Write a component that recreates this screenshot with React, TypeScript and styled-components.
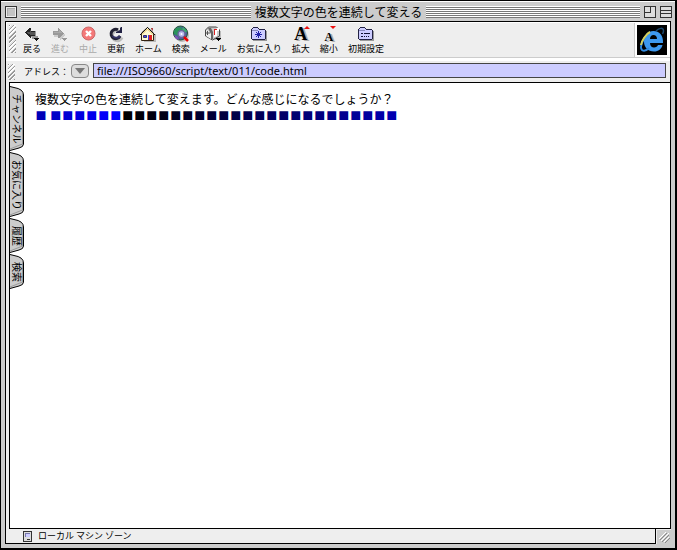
import React from "react";
import styled, { createGlobalStyle } from "styled-components";

const GlobalStyle = createGlobalStyle`
  * { box-sizing: border-box; }
  html, body { margin: 0; padding: 0; }
  body {
    background: #ccc;
    color: #000;
    font-family: "Noto Sans CJK JP", sans-serif;
    font-size: 9px;
    line-height: 12px;
  }
  button, input { font: inherit; color: inherit; }
`;

const Window = styled.div`
  display: flex;
  flex-direction: column;
  min-height: 100vh;
  background: #ccc;
  border: 1px solid #000;
  border-width: 1px 2px 2px 1px;
`;

const TitleBar = styled.header`
  display: flex;
  align-items: center;
  height: 20px;
  padding: 0 3px 0 4px;
  gap: 4px;
  border-top: 1px solid #fff;
`;

const TitleSide = styled.div`
  flex: 1;
  display: flex;
  align-items: center;
  gap: 4px;
`;

const WindowTitle = styled.h1`
  margin: 0;
  font-size: 12px;
  font-weight: 400;
  line-height: 18px;
  white-space: nowrap;
`;

const Stripes = styled.div`
  flex: 1;
  height: 12px;
  background: repeating-linear-gradient(#fff 0 1px, #777 1px 2px);
`;

const BoxButton = styled.button`
  display: block;
  width: 12px;
  height: 12px;
  padding: 0;
  border: 0;
  background: none;
  svg { display: block; }
`;

const Frame = styled.div`
  flex: 1;
  display: flex;
  flex-direction: column;
  margin: 0 4px;
  border: 1px solid #000;
  border-bottom: 0;
  background: #eee;
`;

const ToolRow = styled.div`
  display: flex;
  height: 36px;
  border: 1px solid #fff;
  border-right: 0;
  border-bottom: 1px solid #ccc;
`;

const Grip = styled.div<{ $tall?: boolean }>`
  width: 7px;
  height: ${(p) => (p.$tall ? 28 : 16)}px;
  margin: 2px 0 0 2px;
  background: repeating-linear-gradient(135deg, #999 0 1px, #fff 1px 2px, #e4e4e4 2px 3px);
`;

const Tools = styled.nav`
  flex: 1;
  display: flex;
  gap: 10px;
  padding-left: 7px;
`;

const Tool = styled.button<{ $dim?: boolean }>`
  display: flex;
  flex-direction: column;
  align-items: center;
  padding: 2px 0 0;
  border: 0;
  background: none;
  color: ${(p) => (p.$dim ? "#aaa" : "#000")};
  white-space: nowrap;
  svg { display: block; margin: 0 -2px; }
`;

const LetterIcon = styled.span<{ $size: number }>`
  position: relative;
  display: flex;
  align-items: flex-end;
  height: 18px;
  padding-bottom: 1px;
  font-family: "Liberation Serif", serif;
  font-size: ${(p) => p.$size}px;
  font-weight: 700;
  line-height: ${(p) => p.$size - 3}px;
  text-shadow: 2px 1px 0 #aaa;
  svg {
    position: absolute;
    top: 1px;
    right: -3px;
    margin: 0;
  }
`;

const LogoPanel = styled.div`
  padding: 2px 3px 2px 2px;
  border-left: 1px solid #ccc;
  background: #fff;
  svg { display: block; }
`;

const AddressRow = styled.form`
  display: flex;
  height: 24px;
  padding: 1px 4px 0 0;
  border-top: 3px solid #fff;
  label { margin: 4px 2px 0 9px; white-space: nowrap; }
`;

const HistoryButton = styled.button`
  width: 18px;
  height: 14px;
  margin: 2px 4px 0 0;
  padding: 0;
  border: 1px solid #888;
  border-radius: 4px;
  background: #ddd;
  svg { display: block; margin: auto; }
`;

const AddressInput = styled.input`
  flex: 1;
  min-width: 0;
  height: 15px;
  margin-top: 1px;
  padding: 0 3px;
  border: 1px solid #444;
  border-radius: 0;
  background: #ccccff;
  font-family: "Noto Sans", sans-serif;
  font-size: 11px;
  outline: 0;
`;

const Content = styled.div`
  flex: 1;
  display: flex;
  margin-left: 3px;
  margin-right: -1px;
  border: 1px solid #000;
  background: #fff;
`;

const Tabs = styled.nav`
  display: flex;
  flex-direction: column;
  width: 14px;
  padding-top: 3px;
`;

const Tab = styled.button<{ $height: number }>`
  display: grid;
  place-items: center;
  width: 14px;
  height: ${(p) => p.$height}px;
  margin-bottom: 1px;
  padding: 0;
  border: 0;
  background: none;
  font-size: 10px;
  > * { grid-area: 1 / 1; }
  span {
    writing-mode: vertical-rl;
    text-orientation: sideways;
    white-space: nowrap;
  }
`;

const Page = styled.main`
  padding: 7px 11px;
  font-size: 12px;
  line-height: 18px;
`;

const Line = styled.p`
  margin: 0;
`;

const ColorRow = styled.p`
  margin: 1px 0 0;
  line-height: 12px;
`;

const Square = styled.span<{ $blue: number }>`
  display: inline-block;
  width: 12px;
  font-size: 11px;
  text-align: center;
  color: rgb(0, 0, ${(p) => p.$blue});
`;

const Footer = styled.footer`
  display: flex;
  height: 19px;
  padding: 0 4px 4px;
`;

const Status = styled.div`
  flex: 1;
  display: flex;
  align-items: center;
  gap: 6px;
  padding-left: 17px;
  border: 1px solid #000;
  border-top: 0;
  background: #eee;
`;

const ResizeCorner = styled.div`
  display: grid;
  place-items: center;
  width: 15px;
  border: 1px solid #eee;
  border-right: 0;
  border-bottom: 0;
`;

const Caret = ({ x }: { x: number }) => (
  <path d={`M${x} 13h5v1h-1v1h-1v1h-1v-1h-1v-1h-1z`} />
);

const BackIcon = () => (
  <svg width="20" height="18" viewBox="0 0 20 18" shapeRendering="crispEdges">
    <path d="M8 6h6v5h2v3h-6v-2H7z" fill="#999" />
    <path d="M3 7h1V6h1V5h1V4h1V3h2v3h4v5H9v2H8v-1H7v-1H6v-1H5v-1H4V8H3z" fill="#222" />
    <path d="M5 7h3V5h1v2h4v3H8V9H6z" fill="#555" />
    <g fill="#111"><Caret x={12} /></g>
  </svg>
);

const ForwardIcon = () => (
  <svg width="20" height="18" viewBox="0 0 20 18" shapeRendering="crispEdges">
    <path d="M4 7h5V4l6 6-5 5v-3H4z" fill="#ccc" />
    <path d="M3 6h5V3h1v1h1v1h1v1h1v1h1v1h1v1h-1v1h-1v1h-1v1h-1v1H8v-3H3z" fill="#999" />
    <path d="M4 7h5V5l3 3H4z" fill="#aaa" />
    <g fill="#999"><Caret x={12} /></g>
  </svg>
);

const StopIcon = () => (
  <svg width="18" height="18" viewBox="0 0 18 18">
    <circle cx="9.5" cy="8.5" r="6.5" fill="#f47878" stroke="#c66" />
    <path d="M7 6l5 5M12 6l-5 5" stroke="#fff" strokeWidth="2.4" />
  </svg>
);

const RefreshIcon = () => (
  <svg width="18" height="18" viewBox="0 0 18 18">
    <path d="M14 11.5A5 5 0 1 1 11 5" transform="translate(1 1)" fill="none" stroke="#bbb" strokeWidth="3" />
    <path d="M13 11A4.7 4.7 0 1 1 11 4.8" fill="none" stroke="#223" strokeWidth="3" />
    <path d="M13 10.8A4.7 4.7 0 0 1 5.5 11" fill="none" stroke="#336" strokeWidth="2" />
    <path d="M9 8h6V2h-1l-1 1v2l-4 2z" fill="#224" />
  </svg>
);

const HomeIcon = () => (
  <svg width="20" height="18" viewBox="0 0 20 18">
    <path d="M6 9h12v8H6z" fill="#bbb" />
    <path d="M3.5 8v7.5h12V8l-6-5.500z" fill="#fffbd0" stroke="#321" />
    <path d="M2 10l7.500-7.500L17 10" fill="none" stroke="#111" />
    <path d="M4 9.500L9.500 4 15 9.500" fill="none" stroke="#e0b860" />
    <path d="M5.500 10.500h3v2h-3z" fill="#44e" stroke="#336" />
    <path d="M11 10h3v5h-3z" fill="#d22" />
    <path d="M10 10h1v5h-1z" fill="#44d" />
    <path d="M13 3h2v3l-2-2z" fill="#a44" />
  </svg>
);

const SearchIcon = () => (
  <svg width="20" height="18" viewBox="0 0 20 18">
    <circle cx="11" cy="10" r="7" fill="#bbb" />
    <circle cx="9.500" cy="8" r="7" fill="#4a5f9d" stroke="#253" />
    <path d="M5 3l5-1 2 3-4 2-1 4-4-2V6z" fill="#2a955b" />
    <path d="M12 2l4 4-2 2-3-2z" fill="#3ab16a" />
    <path d="M3 10l4 2 1 3-3-1z" fill="#8053b5" />
    <circle cx="10.500" cy="9" r="3.500" fill="#b6b6ec" stroke="#666699" strokeWidth="1.500" />
    <circle cx="10.500" cy="9" r="1" fill="#fff" />
    <path d="M13 12l4 4" stroke="#e00" strokeWidth="2.500" />
  </svg>
);

const MailIcon = () => (
  <svg width="20" height="18" viewBox="0 0 20 18">
    <path d="M6 6h12v9H8z" fill="#bbb" />
    <path d="M2.500 5l3-3h8l3 3v6l-7 4-7-4z" fill="#ccc" stroke="#444" />
    <path d="M3 5l3 1 2 3v5l-5-3z" fill="#eee" />
    <path d="M5 3h3l2 4v7H8V9z" fill="#666" />
    <path d="M4.500 6v4M3 8h4" stroke="#555" />
    <path d="M11 12V6l3-3h2v3h-2v5z" fill="#fff" />
    <path d="M11.500 5v5M11 4.500h3" fill="none" stroke="#d22" />
    <Caret x={13} />
  </svg>
);

const Folder = ({ children }: { children: React.ReactNode }) => (
  <svg width="20" height="18" viewBox="0 0 20 18" shapeRendering="crispEdges">
    <path d="M4 6h14v10H4z" fill="#999" />
    <path d="M2 4h1V3h1V2h5v1h1v1h6v1h1v9h-1v1H3v-1H2z" fill="#224" />
    <path d="M3 4h1V3h5v1h1v1h6v9H3z" fill="#ccf" />
    <path d="M3 5h6v1H3z" fill="#88b" />
    {children}
  </svg>
);

const FavoritesIcon = () => (
  <Folder>
    <path d="M9 6h1v7H9zM6 9h7v1H6zM7 7h1v1H7zM8 8h3v3H8zM11 7h1v1h-1zM7 11h1v1H7zM11 11h1v1h-1z" fill="#22a" />
  </Folder>
);

const PrefsIcon = () => (
  <Folder>
    <path d="M5 8h2v1H5zM8 8h6v1H8zM5 11h2v1H5zM8 11h1v1H8zM10 11h1v1h-1zM12 11h1v1h-1z" fill="#113" />
  </Folder>
);

const LargerIcon = () => (
  <LetterIcon $size={18}>
    A
    <svg width="6" height="3"><path d="M0 3h6L3 0z" fill="#e11" /></svg>
  </LetterIcon>
);

const SmallerIcon = () => (
  <LetterIcon $size={12}>
    A
    <svg width="6" height="3"><path d="M0 0h6L3 3z" fill="#e11" /></svg>
  </LetterIcon>
);

const ExplorerLogo = () => (
  <svg width="30" height="30" viewBox="0 0 30 30" role="img" aria-label="Internet Explorer">
    <path d="M0 0h30v30H0z" />
    <path d="M19 6C22 3 26.500 2 26.500 6c0 1-.5 2-1 3" fill="none" stroke="#1a466c" strokeWidth="1.500" />
    <path
      d="M26 18H13c0 3 2 4.500 4 4.500s3.500-1 4-2.500h4.500c-1 4-4 6.500-8.500 6.500-6 0-10-4-10-10S11 6 16.500 6 26.500 10 26 18zM13 14h7c0-2.500-1.500-4-3.500-4s-3.500 1.500-3.500 4z"
      fill="#3d98ee"
    />
    <path d="M13 7C7 11 2 22 5 25c2 1.500 5 0 7-2" fill="none" stroke="#3189dd" strokeWidth="2" />
    <path d="M13 7C9 9 4.500 16 4 20" fill="none" stroke="#d8ce58" strokeWidth="2" />
  </svg>
);

type ToolItem = { label: string; icon: React.ReactNode; dim?: boolean };

const toolItems: ToolItem[] = [
  { label: "戻る", icon: <BackIcon /> },
  { label: "進む", icon: <ForwardIcon />, dim: true },
  { label: "中止", icon: <StopIcon />, dim: true },
  { label: "更新", icon: <RefreshIcon /> },
  { label: "ホーム", icon: <HomeIcon /> },
  { label: "検索", icon: <SearchIcon /> },
  { label: "メール", icon: <MailIcon /> },
  { label: "お気に入り", icon: <FavoritesIcon /> },
  { label: "拡大", icon: <LargerIcon /> },
  { label: "縮小", icon: <SmallerIcon /> },
  { label: "初期設定", icon: <PrefsIcon /> },
];

const tabItems = [
  { label: "チャンネル", height: 65 },
  { label: "お気に入り", height: 65 },
  { label: "履歴", height: 35 },
  { label: "検索", height: 35 },
];

const blues = [184, 200, 212, 224, 236, 248, 255, ...Array.from({ length: 23 }, (_, i) => i * 8)];

const TabShape = ({ height }: { height: number }) => (
  <svg width="14" height={height} viewBox={`0 0 14 ${height}`} aria-hidden="true">
    <path
      d={`M0 .5L4 1.500Q13.500 3 13.500 9V${height - 7}Q13.500 ${height - 4} 9 ${height - 3}L0 ${height - 0.5}`}
      fill="#ccc"
      stroke="#000"
    />
    <path d={`M12.500 8V${height - 7}L0 ${height - 2}`} fill="none" stroke="#999" />
  </svg>
);

export default function App() {
  return (
    <>
      <GlobalStyle />
      <Window>
        <TitleBar>
          <TitleSide>
            <BoxButton type="button" aria-label="閉じる">
              <svg width="12" height="12" shapeRendering="crispEdges">
                <path d="M0 0h12v12H0z" fill="#333" />
                <path d="M1 1h10v10H1z" fill="#eee" />
                <path d="M2 2h8v8H2z" fill="#aaa" />
                <path d="M3 3h7v7H3z" fill="#c4c4c4" />
              </svg>
            </BoxButton>
            <Stripes />
          </TitleSide>
          <WindowTitle>複数文字の色を連続して変える</WindowTitle>
          <TitleSide>
            <Stripes />
            <BoxButton type="button" aria-label="ズーム">
              <svg width="12" height="12" shapeRendering="crispEdges">
                <path d="M0 0h12v12H0z" fill="#333" />
                <path d="M1 1h10v10H1z" fill="#ddd" />
                <path d="M6 1h1v6H1V6h5z" fill="#333" />
              </svg>
            </BoxButton>
            <BoxButton type="button" aria-label="たたむ">
              <svg width="12" height="12" shapeRendering="crispEdges">
                <path d="M0 0h12v12H0z" fill="#333" />
                <path d="M1 1h10v10H1z" fill="#ddd" />
                <path d="M1 4h10v1H1zM1 7h10v1H1z" fill="#333" />
              </svg>
            </BoxButton>
          </TitleSide>
        </TitleBar>
        <Frame>
          <ToolRow>
            <Grip $tall />
            <Tools>
              {toolItems.map((item) => (
                <Tool key={item.label} type="button" $dim={item.dim}>
                  {item.icon}
                  {item.label}
                </Tool>
              ))}
            </Tools>
            <LogoPanel>
              <ExplorerLogo />
            </LogoPanel>
          </ToolRow>
          <AddressRow onSubmit={(e) => e.preventDefault()}>
            <Grip />
            <label htmlFor="address">アドレス：</label>
            <HistoryButton type="button" aria-label="履歴を表示">
              <svg width="10" height="6"><path d="M0 0h10L5 6z" fill="#777" /></svg>
            </HistoryButton>
            <AddressInput id="address" type="text" defaultValue="file:///ISO9660/script/text/011/code.html" />
          </AddressRow>
          <Content>
            <Tabs>
              {tabItems.map((tab) => (
                <Tab key={tab.label} type="button" $height={tab.height}>
                  <TabShape height={tab.height} />
                  <span>{tab.label}</span>
                </Tab>
              ))}
            </Tabs>
            <Page>
              <Line>複数文字の色を連続して変えます。どんな感じになるでしょうか？</Line>
              <ColorRow>
                {blues.map((blue, i) => (
                  <React.Fragment key={i}>
                    <Square $blue={blue}>■</Square>
                    {i === 0 && " "}
                  </React.Fragment>
                ))}
              </ColorRow>
            </Page>
          </Content>
        </Frame>
        <Footer>
          <Status>
            <svg width="9" height="11" shapeRendering="crispEdges">
              <path d="M0 0h9v11H0z" fill="#333" />
              <path d="M1 1h7v9H1z" fill="#ddd" />
              <path d="M2 2h5v4H2z" fill="#77a" />
              <path d="M3 3h4v3H3z" fill="#ccf" />
              <path d="M4 8h3v1H4z" fill="#333" />
            </svg>
            ローカル マシン ゾーン
          </Status>
          <ResizeCorner>
            <svg width="12" height="12">
              <path d="M1 8l7-7M3 10l8-8M6 11l5-5" stroke="#fff" />
              <path d="M2 9l7-7M4 11l7-7M7 12l5-5" stroke="#888" />
            </svg>
          </ResizeCorner>
        </Footer>
      </Window>
    </>
  );
}
